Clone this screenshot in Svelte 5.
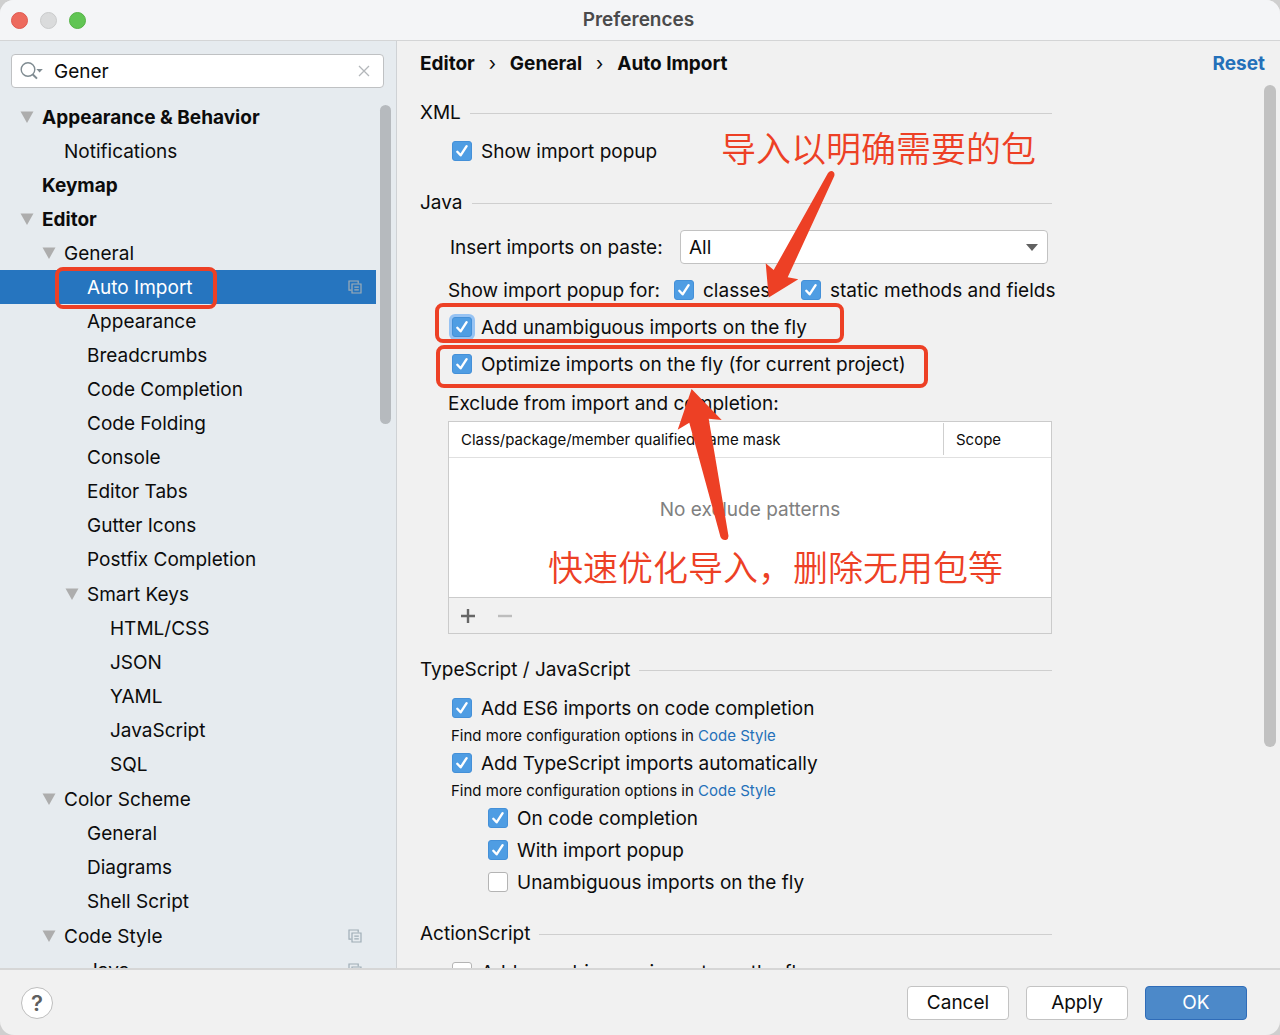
<script lang="ts">
  type Row = { label: string; depth: number; open?: boolean; bold?: boolean; selected?: boolean; project?: boolean };

  const rows: Row[] = [
    { label: 'Appearance & Behavior', depth: 0, open: true, bold: true },
    { label: 'Notifications', depth: 1 },
    { label: 'Keymap', depth: 0, bold: true },
    { label: 'Editor', depth: 0, open: true, bold: true },
    { label: 'General', depth: 1, open: true },
    { label: 'Auto Import', depth: 2, selected: true, project: true },
    { label: 'Appearance', depth: 2 },
    { label: 'Breadcrumbs', depth: 2 },
    { label: 'Code Completion', depth: 2 },
    { label: 'Code Folding', depth: 2 },
    { label: 'Console', depth: 2 },
    { label: 'Editor Tabs', depth: 2 },
    { label: 'Gutter Icons', depth: 2 },
    { label: 'Postfix Completion', depth: 2 },
    { label: 'Smart Keys', depth: 2, open: true },
    { label: 'HTML/CSS', depth: 3 },
    { label: 'JSON', depth: 3 },
    { label: 'YAML', depth: 3 },
    { label: 'JavaScript', depth: 3 },
    { label: 'SQL', depth: 3 },
    { label: 'Color Scheme', depth: 1, open: true },
    { label: 'General', depth: 2 },
    { label: 'Diagrams', depth: 2 },
    { label: 'Shell Script', depth: 2 },
    { label: 'Code Style', depth: 1, open: true, project: true },
    { label: 'Java', depth: 2, project: true }
  ];

  let query = $state('Gener');
</script>

{#snippet check(label: string, on: boolean, focused = false)}
  <label class="check" class:focused>
    <span class="box">
      <input type="checkbox" checked={on} />
      <svg viewBox="0 0 20 20" aria-hidden="true"><path d="M5.3 10.8 8.6 14.3 14.6 5.2" /></svg>
    </span>
    <span class="text">{label}</span>
  </label>
{/snippet}

{#snippet more()}
  <p class="more">Find more configuration options in <a href="#code-style">Code Style</a></p>
{/snippet}

<div class="window">
  <header class="titlebar">
    <div class="lights">
      <button class="close" aria-label="Close"></button>
      <button class="minimize" aria-label="Minimize"></button>
      <button class="zoom" aria-label="Zoom"></button>
    </div>
    <h1>Preferences</h1>
  </header>

  <div class="panes">
    <aside>
      <div class="search">
        <svg class="glass" viewBox="0 0 24 20" aria-hidden="true">
          <circle cx="8" cy="8.500" r="6.800" />
          <path d="M12.600 13.200 17 17.600" />
          <path class="caret" d="M16.400 8h6.400L19.600 11.500z" />
        </svg>
        <input type="text" aria-label="Search settings" bind:value={query} />
        <button aria-label="Clear search" onclick={() => (query = '')}>
          <svg viewBox="0 0 12 12" aria-hidden="true"><path d="M1 1 11 11M11 1 1 11" /></svg>
        </button>
      </div>
      <div class="scroller">
        <ul class="tree">
          {#each rows as row}
            <li class="depth{row.depth}" class:bold={row.bold} class:selected={row.selected} class:branch={row.open}>
              <span class="toggle">
                {#if row.open}
                  <svg viewBox="0 0 14 12" aria-hidden="true"><path d="M0.500 0.500h13L7 12z" /></svg>
                {/if}
              </span>
              <span class="name text">{row.label}</span>
              {#if row.project}
                <svg class="project" viewBox="0 0 14 14" aria-hidden="true">
                  <path d="M3.500 10.200H1V1h9.200v2.500" />
                  <path d="M4 4h9v9H4zM6.300 7.200h4.500M6.300 9.800h4.500" />
                </svg>
              {/if}
            </li>
          {/each}
        </ul>
        <div class="bar"><div class="thumb short"></div></div>
      </div>
    </aside>

    <main>
      <div class="top">
        <nav aria-label="Breadcrumb">
          <span>Editor</span><i>›</i><span>General</span><i>›</i><span>Auto Import</span>
        </nav>
        <a class="reset" href="#reset">Reset</a>
      </div>

      <div class="scroller">
        <form>
          <section>
            <h2>XML</h2>
            <div class="body">{@render check('Show import popup', true)}</div>
          </section>

          <section>
            <h2>Java</h2>
            <div class="body">
              <div class="paste">
                <label class="text" for="paste">Insert imports on paste:</label>
                <div class="select">
                  <select id="paste"><option>All</option><option>Ask</option><option>None</option></select>
                  <svg viewBox="0 0 12 7" aria-hidden="true"><path d="M0 0h12L6 7z" /></svg>
                </div>
              </div>
              <div class="popup">
                <span class="text">Show import popup for:</span>
                {@render check('classes', true)}
                {@render check('static methods and fields', true)}
              </div>
              {@render check('Add unambiguous imports on the fly', true, true)}
              <div class="optimize">{@render check('Optimize imports on the fly (for current project)', true)}</div>
              <p class="caption" id="exclude">Exclude from import and completion:</p>
              <div class="excludes">
                <table aria-labelledby="exclude">
                  <thead>
                    <tr><th>Class/package/member qualified name mask</th><th class="scope"><span>Scope</span></th></tr>
                  </thead>
                  <tbody>
                    <tr><td colspan="2">No exclude patterns</td></tr>
                  </tbody>
                </table>
                <div class="tools">
                  <button type="button" aria-label="Add"><svg viewBox="0 0 16 16" aria-hidden="true"><path d="M8 1v14M1 8h14" /></svg></button>
                  <button type="button" aria-label="Remove" disabled><svg viewBox="0 0 16 16" aria-hidden="true"><path d="M1 8h14" /></svg></button>
                </div>
              </div>
            </div>
          </section>

          <section>
            <h2>TypeScript / JavaScript</h2>
            <div class="body">
              {@render check('Add ES6 imports on code completion', true)}
              {@render more()}
              {@render check('Add TypeScript imports automatically', true)}
              {@render more()}
              <div class="nested">
                {@render check('On code completion', true)}
                {@render check('With import popup', true)}
                {@render check('Unambiguous imports on the fly', false)}
              </div>
            </div>
          </section>

          <section>
            <h2>ActionScript</h2>
            <div class="body">{@render check('Add unambiguous imports on the fly', false)}</div>
          </section>
        </form>
        <div class="bar wide"><div class="thumb tall"></div></div>
      </div>
    </main>
  </div>

  <footer>
    <button class="help" aria-label="Help">?</button>
    <div class="actions">
      <button>Cancel</button>
      <button>Apply</button>
      <button class="primary">OK</button>
    </div>
  </footer>

  <!-- Hand-drawn callouts lying over the dialog -->
  <div class="notes">
    <svg viewBox="0 0 1280 1035" aria-hidden="true">
      <rect x="57" y="269" width="158" height="38" rx="6" />
      <rect x="437" y="305" width="405" height="36" rx="6" />
      <rect x="438" y="347" width="488" height="39" rx="6" />
      <path d="M768.700 297.500 765.700 263.300 773.700 270 828 173Q831 169.500 834 172.500 834.800 174 834.300 176L787.700 277.300 798.300 279.300z" />
      <path d="M691.600 389 677.700 429.700 689.300 422.700 720.500 537Q722 540.500 726 540 728.500 539 728.500 536L708.700 418.700 721.700 420z" />
    </svg>
    <p class="upper">导入以明确需要的包</p>
    <p class="lower">快速优化导入，删除无用包等</p>
  </div>
</div>

<style>
  :global(body) {
    margin: 0;
    background: #cfcfcf;
  }

  .window {
    position: relative;
    display: flex;
    flex-direction: column;
    height: 100vh;
    overflow: hidden;
    border-radius: 14px;
    background: #f1f1f1;
    color: #0c0c0c;
    font: 19px/24px Inter, "Noto Sans", sans-serif;
  }

  .window * {
    box-sizing: border-box;
  }

  h1, h2, p, ul {
    margin: 0;
    padding: 0;
    font: inherit;
  }

  button, input, select {
    margin: 0;
    padding: 0;
    color: inherit;
    font: inherit;
  }

  svg {
    display: block;
    fill: none;
  }

  a {
    color: #2470b9;
    text-decoration: none;
  }

  .text {
    padding-top: 2px;
  }

  .titlebar {
    display: grid;
    grid-template-columns: 1fr auto 1fr;
    align-items: center;
    flex: none;
    height: 41px;
    padding: 0 14px 0 11px;
    border-bottom: 1px solid #d4d5d6;
    background: #f4f5f7;
  }

  .lights {
    display: flex;
    gap: 12px;
  }

  .lights button {
    width: 17px;
    height: 17px;
    border: 1px solid #df584f;
    border-radius: 50%;
    background: #ed6a5e;
  }

  .lights .minimize {
    border-color: #c9cacb;
    background: #dadbdc;
  }

  .lights .zoom {
    border-color: #55b246;
    background: #61c554;
  }

  h1 {
    color: #4a4a4b;
    font-weight: 600;
    line-height: 38px;
  }

  .panes {
    display: flex;
    flex: 1;
    min-height: 0;
  }

  aside {
    display: flex;
    flex-direction: column;
    flex: 0 0 397px;
    border-right: 1px solid #cfd2d5;
    background: #e6ebef;
  }

  .search {
    display: flex;
    align-items: center;
    flex: none;
    height: 34px;
    margin: 13px 12px 12px 11px;
    padding: 0 13px 0 8px;
    border: 1px solid #bfc1c3;
    border-radius: 4px;
    background: #fff;
  }

  .glass {
    width: 24px;
    height: 20px;
    stroke: #7f8b91;
    stroke-width: 1.4;
  }

  .glass path {
    stroke-width: 2;
  }

  .glass .caret {
    fill: #7f8b91;
    stroke: none;
  }

  .search input {
    flex: 1;
    min-width: 0;
    margin-left: 10px;
    padding-top: 2px;
    border: 0;
    outline: 0;
    background: none;
  }

  .search button {
    width: 12px;
    height: 12px;
    border: 0;
    background: none;
  }

  .search button path {
    stroke: #b3b7ba;
    stroke-width: 1.3;
  }

  .scroller {
    display: flex;
    flex: 1;
    min-height: 0;
    overflow: hidden;
  }

  .tree {
    flex: 1;
    list-style: none;
  }

  .tree li {
    display: flex;
    align-items: center;
    height: 34px;
    padding-right: 14px;
  }

  .tree .depth0 { padding-left: 20px; }
  .tree .depth1 { padding-left: 42px; }
  .tree .depth2 { padding-left: 65px; }
  .tree .depth3 { padding-left: 88px; }

  .tree .branch:not(.depth0, .depth1:nth-child(5)) {
    margin-top: 1px;
  }

  .bold {
    font-weight: 700;
  }

  .selected {
    background: #2675bf;
    color: #fff;
  }

  .toggle {
    width: 22px;
  }

  .toggle svg {
    width: 14px;
    height: 12px;
    fill: #adadad;
  }

  .name {
    flex: 1;
  }

  .project {
    width: 14px;
    height: 14px;
    stroke: #9fadb6;
    stroke-width: 1.2;
  }

  .bar {
    flex: none;
    width: 20px;
    padding: 5px 5px 0 4px;
  }

  .bar.wide {
    width: 16px;
    padding: 0 4px 0 0;
  }

  .thumb {
    border-radius: 6px;
    background: #b6babe;
  }

  .short { height: 37%; }

  .tall {
    height: 75%;
    background: #c1c1c1;
  }

  main {
    display: flex;
    flex-direction: column;
    flex: 1;
    min-width: 0;
  }

  .top {
    display: flex;
    align-items: center;
    justify-content: space-between;
    flex: none;
    height: 44px;
    padding: 2px 15px 0 23px;
    font-weight: 700;
  }

  nav {
    display: flex;
  }

  nav i {
    width: 35px;
    font-style: normal;
    font-weight: 400;
    text-align: center;
  }

  form {
    flex: 1;
    min-width: 0;
    padding: 16px 212px 0 23px;
  }

  section {
    margin-bottom: 24px;
  }

  h2 {
    display: flex;
    align-items: center;
    gap: 9px;
  }

  h2::after {
    content: "";
    flex: 1;
    height: 1px;
    background: #cfcfcf;
  }

  .body {
    padding: 10px 0 0 28px;
  }

  .check {
    display: flex;
    align-items: center;
    gap: 9px;
    height: 32px;
    padding-left: 4px;
    white-space: nowrap;
  }

  .box {
    display: grid;
    width: 20px;
    height: 20px;
  }

  .box > * {
    grid-area: 1 / 1;
    width: 20px;
    height: 20px;
  }

  .box input {
    appearance: none;
    border: 1px solid #b4b4b4;
    border-radius: 3px;
    background: #fff;
  }

  .box input:checked {
    border-color: #4490d8;
    background: #4f9de3;
  }

  .box svg {
    visibility: hidden;
    pointer-events: none;
    stroke: #fff;
    stroke-width: 2.4;
    stroke-linecap: round;
    stroke-linejoin: round;
  }

  .box input:checked + svg {
    visibility: visible;
  }

  .focused input {
    box-shadow: 0 0 0 3px #97c3f3;
  }

  .paste {
    display: flex;
    align-items: center;
    height: 44px;
    padding: 0 4px 0 2px;
  }

  .paste label {
    flex: 0 0 230px;
  }

  .select {
    display: grid;
    flex: 1;
    align-items: center;
  }

  .select > * {
    grid-area: 1 / 1;
  }

  select {
    appearance: none;
    width: 100%;
    height: 34px;
    padding: 2px 8px 0;
    border: 1px solid #c2c2c2;
    border-radius: 4px;
    background: #fff;
  }

  .select svg {
    justify-self: end;
    width: 12px;
    height: 7px;
    margin-right: 10px;
    fill: #616161;
    pointer-events: none;
  }

  .popup {
    display: flex;
    align-items: center;
    height: 42px;
    white-space: nowrap;
  }

  .popup > span {
    flex: 0 0 222px;
  }

  .popup .check:nth-child(2) {
    flex: 0 0 127px;
  }

  .optimize {
    padding: 5px 0;
  }

  .caption {
    height: 36px;
    line-height: 38px;
  }

  .excludes {
    border: 1px solid #cbcbcb;
    background: #fff;
  }

  table {
    width: 100%;
    border-collapse: collapse;
  }

  th {
    height: 35px;
    padding: 2px 0 0 12px;
    border-bottom: 1px solid #e0e0e0;
    font-size: 15px;
    font-weight: 400;
    text-align: left;
  }

  .scope {
    width: 108px;
    padding: 0;
  }

  .scope span {
    display: block;
    padding: 5px 12px 3px;
    border-left: 1px solid #cfcfcf;
  }

  td {
    height: 140px;
    padding: 0 0 34px;
    color: #808080;
    text-align: center;
  }

  .tools {
    display: flex;
    align-items: center;
    gap: 21px;
    height: 36px;
    padding-left: 11px;
    border-top: 1px solid #cbcbcb;
    background: #f1f1f1;
  }

  .tools button {
    width: 16px;
    height: 16px;
    border: 0;
    background: none;
  }

  .tools path {
    stroke: #666;
    stroke-width: 2.4;
  }

  .tools button:disabled path {
    stroke: #bdbdbd;
  }

  .more {
    padding-left: 3px;
    font-size: 15px;
    line-height: 23px;
  }

  .nested {
    padding-left: 36px;
  }

  footer {
    display: flex;
    align-items: center;
    justify-content: space-between;
    flex: none;
    height: 67px;
    padding: 0 33px 0 21px;
    border-top: 2px solid #d6d6d6;
  }

  .help {
    width: 32px;
    height: 32px;
    border: 1px solid #bebebe;
    border-radius: 50%;
    background: #fff;
    color: #5f5f5f;
    font-size: 22px;
    font-weight: 600;
  }

  .actions {
    display: flex;
    gap: 17px;
  }

  .actions button {
    width: 102px;
    height: 34px;
    border: 1px solid #c3c3c3;
    border-radius: 4px;
    background: #fff;
  }

  .actions .primary {
    border-color: #2f6cb8;
    background: #4c89c9;
    color: #fff;
  }

  .notes {
    position: absolute;
    top: 0;
    left: 0;
    color: #ed4025;
    font: 350 35px/40px "Noto Sans CJK SC", sans-serif;
    pointer-events: none;
  }

  .notes svg {
    width: 1280px;
    height: 1035px;
  }

  .notes rect {
    stroke: currentColor;
    stroke-width: 4;
  }

  .notes path {
    fill: currentColor;
  }

  .notes p {
    position: absolute;
    white-space: nowrap;
  }

  .upper {
    top: 127px;
    left: 721px;
  }

  .lower {
    top: 546px;
    left: 548px;
  }
</style>
